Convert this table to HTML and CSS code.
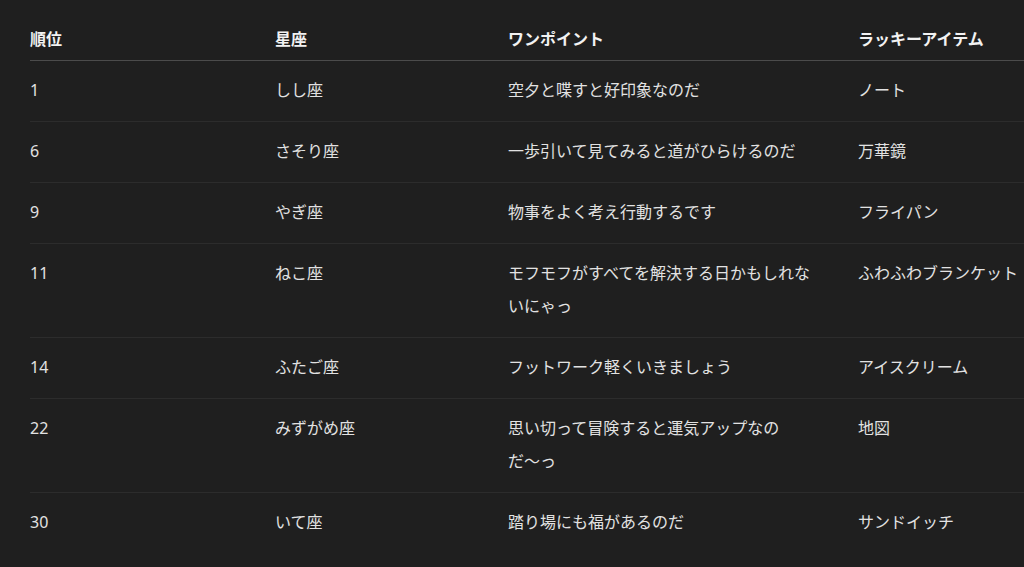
FILE: index.html
```html
<!DOCTYPE html>
<html lang="ja">
<head>
<meta charset="utf-8">
<title>ランキング</title>
<link rel="stylesheet" href="styles.css">
</head>
<body>
<div class="wrap">
<table class="rank">
  <colgroup>
    <col class="c-rank">
    <col class="c-sign">
    <col class="c-point">
    <col class="c-item">
  </colgroup>
  <thead>
    <tr><th>順位</th><th>星座</th><th>ワンポイント</th><th>ラッキーアイテム</th></tr>
  </thead>
  <tbody>
    <tr><td>1</td><td>しし座</td><td>空夕と喋すと好印象なのだ</td><td>ノート</td></tr>
    <tr><td>6</td><td>さそり座</td><td>一歩引いて見てみると道がひらけるのだ</td><td>万華鏡</td></tr>
    <tr><td>9</td><td>やぎ座</td><td>物事をよく考え行動するです</td><td>フライパン</td></tr>
    <tr><td>11</td><td>ねこ座</td><td>モフモフがすべてを解決する日かもしれないにゃっ</td><td>ふわふわブランケット</td></tr>
    <tr><td>14</td><td>ふたご座</td><td>フットワーク軽くいきましょう</td><td>アイスクリーム</td></tr>
    <tr><td>22</td><td>みずがめ座</td><td>思い切って冒険すると運気アップなのだ〜っ</td><td>地図</td></tr>
    <tr><td>30</td><td>いて座</td><td>踏り場にも福があるのだ</td><td>サンドイッチ</td></tr>
  </tbody>
</table>
</div>
</body>
</html>
```

FILE: styles.css
```css
html, body {
  margin: 0;
  padding: 0;
  background: #1f1f1f;
  overflow: hidden;
}
body {
  font-family: "Noto Sans", "Noto Sans CJK JP", sans-serif;
  font-size: 16px;
  color: #e2e2e2;
}
.wrap {
  padding: 13px 0 0 30px;
}
.rank {
  border-collapse: collapse;
  table-layout: fixed;
  width: 994px;
  line-break: strict;
}
.c-rank { width: 245px; }
.c-sign { width: 233px; }
.c-point { width: 350px; }
.c-item { width: 166px; }
.rank th {
  text-align: left;
  font-weight: 700;
  color: #f2f2f2;
  line-height: 24px;
  padding: 14px 40px 9px 0;
  border-bottom: 1px solid #4b4b4b;
  white-space: nowrap;
}
.rank td {
  vertical-align: top;
  line-height: 33px;
  padding: 13px 40px 14px 0;
  border-bottom: 1px solid #2c2c2c;
}
.rank th:last-child,
.rank td:last-child {
  padding-right: 0;
}
.rank tbody tr:last-child td {
  border-bottom: none;
}
```
